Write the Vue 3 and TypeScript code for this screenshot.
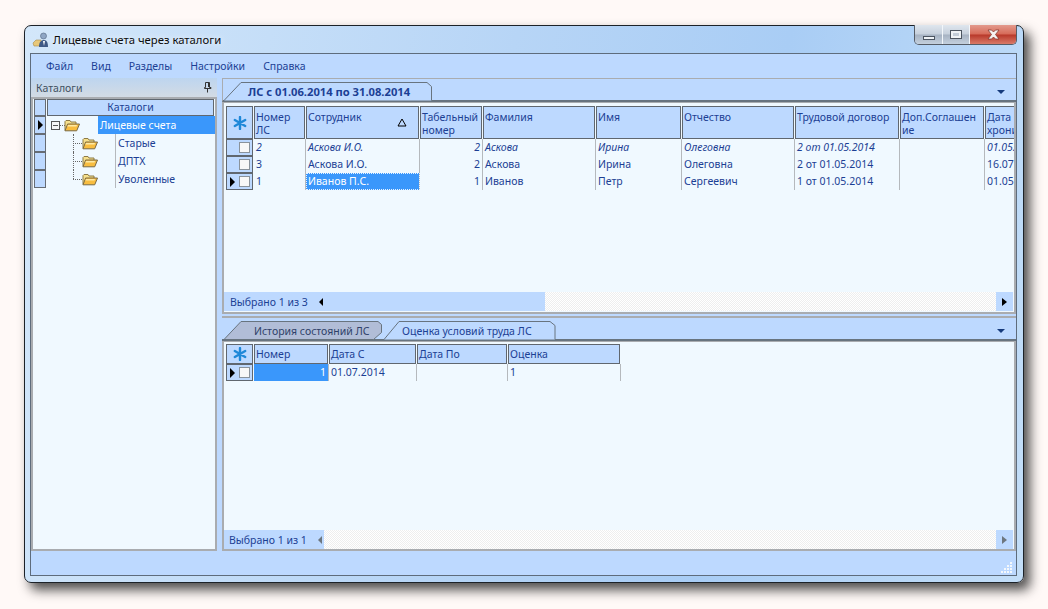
<script setup lang="ts">
interface Col {
  title: string
  width: number
  sort?: boolean
  align?: string
}
interface Row {
  cells: string[]
  italic?: boolean
  current?: boolean
}

const menu = ['Файл', 'Вид', 'Разделы', 'Настройки', 'Справка']

const tree = [
  { text: 'Лицевые счета', root: true },
  { text: 'Старые', root: false },
  { text: 'ДПТХ', root: false },
  { text: 'Уволенные', root: false }
]

const topCols: Col[] = [
  { title: 'Номер ЛС', width: 52 },
  { title: 'Сотрудник', width: 114, sort: true },
  { title: 'Табельный номер', width: 63, align: 'right' },
  { title: 'Фамилия', width: 113 },
  { title: 'Имя', width: 86 },
  { title: 'Отчество', width: 113 },
  { title: 'Трудовой договор', width: 105 },
  { title: 'Доп.Соглашение', width: 85 },
  { title: 'Дата хронизации', width: 56 }
]

const topRows: Row[] = [
  { cells: ['2', 'Аскова И.О.', '2', 'Аскова', 'Ирина', 'Олеговна', '2 от 01.05.2014', '', '01.05.2014'], italic: true },
  { cells: ['3', 'Аскова И.О.', '2', 'Аскова', 'Ирина', 'Олеговна', '2 от 01.05.2014', '', '16.07.2014'] },
  { cells: ['1', 'Иванов П.С.', '1', 'Иванов', 'Петр', 'Сергеевич', '1 от 01.05.2014', '', '01.05.2014'], current: true }
]

const bottomCols: Col[] = [
  { title: 'Номер', width: 75, align: 'right' },
  { title: 'Дата С', width: 88 },
  { title: 'Дата По', width: 91 },
  { title: 'Оценка', width: 113 }
]

const bottomRows: Row[] = [{ cells: ['1', '01.07.2014', '', '1'], current: true }]

const template = (cols: Col[]) => '28px ' + cols.map(c => c.width + 'px').join(' ')
</script>

<template>
  <div class="page">
    <div class="window">
      <div class="titlebar">
        <svg class="app-icon" width="18" height="18" viewBox="0 0 18 18">
          <path d="M1 12l3-3h5l1 6H2z" fill="#e8c87a" stroke="#a88a48" stroke-width=".6" />
          <circle cx="11.500" cy="5" r="3" fill="#8fa6c4" stroke="#51637e" stroke-width=".6" />
          <path d="M7 16c0-5 2-7 5-7s4 3 4 7z" fill="#3f5a86" />
          <path d="M11 10l2 0-1 5z" fill="#fff" />
        </svg>
        <span class="title">Лицевые счета через каталоги</span>
        <div class="win-buttons">
          <div class="win-btn min"><i></i></div>
          <div class="win-btn max"><i></i></div>
          <div class="win-btn close">
            <svg width="15" height="11" viewBox="0 0 15 11">
              <path d="M2 1h3.500l2 2 2-2H13l-3.500 4.500L13 10H9.500l-2-2-2 2H2l3.500-4.500z" fill="#f6f2f0" stroke="#7a3228" stroke-width=".7" />
            </svg>
          </div>
        </div>
      </div>

      <div class="frame">
        <div class="menubar">
          <span v-for="m in menu" :key="m" class="menu-item">{{ m }}</span>
        </div>

        <div class="workspace">
          <!-- Каталоги -->
          <aside class="side">
            <div class="side-head">
              <span>Каталоги</span>
              <svg width="9" height="11" viewBox="0 0 9 11">
                <path d="M2.500 .5h4v5h1.500v1h-6.500v-1h1zM4.500 6.500v4M5.500 1v4" fill="none" stroke="#333" />
              </svg>
            </div>
            <div class="side-grid">
              <div class="tree-row tree-header">
                <div class="indicator"></div>
                <div class="head-cell center">Каталоги</div>
              </div>
              <div v-for="(t, i) in tree" :key="t.text" class="tree-row">
                <div class="indicator">
                  <i v-if="t.root" class="arrow"></i>
                </div>
                <div class="tree-icons">
                  <template v-if="t.root">
                    <span class="expander"></span>
                    <i class="dot-h short"></i>
                  </template>
                  <template v-else>
                    <i class="dot-v" :class="{ last: i === tree.length - 1 }"></i>
                    <i class="dot-h"></i>
                  </template>
                  <svg class="folder" :class="{ root: t.root }" width="16" height="13" viewBox="0 0 16 13">
                    <path d="M1 11.500V2.500l1-1h4l1 1.500h5v2" fill="#f6e08c" stroke="#8d7a45" />
                    <path d="M1 11.800l2.600-6.800h11.900l-2.800 6.800z" fill="#f8bd40" stroke="#7a6a44" />
                    <path d="M4 6l9 0-.6 1.500h-9z" fill="#fde9a4" />
                  </svg>
                </div>
                <div class="tree-text" :class="{ selected: t.root }">{{ t.text }}</div>
              </div>
            </div>
          </aside>

          <div class="right">
            <!-- Верхняя таблица -->
            <section class="pane top-pane">
              <div class="tabstrip top-strip">
                <div class="tab active-top">
                  <svg class="tab-shape" width="208" height="19" viewBox="0 0 208 19">
                    <path d="M0 18.500L17 .5h186l4.500 4v14" fill="#bdd9ff" stroke="#68747f" />
                  </svg>
                  <span class="tab-label bold">ЛС с 01.06.2014 по 31.08.2014</span>
                </div>
                <i class="tab-arrow"></i>
              </div>
              <div class="grid-box">
                <div class="grid-body">
                  <div class="grid-row" :style="{ gridTemplateColumns: template(topCols) }">
                    <div class="head-cell corner tall">
                      <svg width="14" height="14" viewBox="0 0 14 14">
                        <path d="M7 1v12M1.800 4l10.400 6M12.200 4L1.800 10" stroke="#1e88d8" stroke-width="2.400" stroke-linecap="round" />
                      </svg>
                    </div>
                    <div v-for="c in topCols" :key="c.title" class="head-cell tall">
                      <span class="wrap">{{ c.title }}</span>
                      <svg v-if="c.sort" class="sort" width="10" height="9" viewBox="0 0 10 9">
                        <path d="M5 1L9 8H1z" fill="none" stroke="#000" />
                      </svg>
                    </div>
                  </div>
                  <div
                    v-for="r in topRows"
                    :key="r.cells[0]"
                    class="grid-row data"
                    :class="{ italic: r.italic }"
                    :style="{ gridTemplateColumns: template(topCols) }"
                  >
                    <div class="row-head">
                      <i v-if="r.current" class="arrow"></i>
                      <span class="check"></span>
                    </div>
                    <div
                      v-for="(cell, j) in r.cells"
                      :key="j"
                      class="cell"
                      :class="{ right: topCols[j].align === 'right', focus: r.current && j === 1 }"
                    >{{ cell }}</div>
                  </div>
                </div>
                <div class="statusline">
                  <div class="status-left top-status">
                    <span>Выбрано 1 из 3</span>
                    <i class="arrow-left"></i>
                  </div>
                  <div class="hatch"></div>
                  <div class="scroll-btn"><i class="arrow"></i></div>
                </div>
              </div>
            </section>

            <!-- Нижняя таблица -->
            <section class="pane bottom-pane">
              <div class="tabstrip bottom-strip">
                <div class="tab inactive">
                  <svg class="tab-shape" width="158" height="19" viewBox="0 0 158 19">
                    <path d="M0 18.500L17 .5h137l3.500 3v8l-8 7z" fill="#b1bdd7" stroke="#68747f" />
                  </svg>
                  <span class="tab-label">История состояний ЛС</span>
                </div>
                <div class="tab active-bottom">
                  <svg class="tab-shape" width="172" height="19" viewBox="0 0 172 19">
                    <path d="M0 18.500L15 .5h151l5 4v14" fill="#bdd9ff" stroke="#68747f" />
                  </svg>
                  <span class="tab-label">Оценка условий труда ЛС</span>
                </div>
                <i class="tab-arrow"></i>
              </div>
              <div class="grid-box">
                <div class="grid-body">
                  <div class="grid-row" :style="{ gridTemplateColumns: template(bottomCols) }">
                    <div class="head-cell corner low">
                      <svg width="14" height="14" viewBox="0 0 14 14">
                        <path d="M7 1v12M1.800 4l10.400 6M12.200 4L1.800 10" stroke="#1e88d8" stroke-width="2.400" stroke-linecap="round" />
                      </svg>
                    </div>
                    <div v-for="c in bottomCols" :key="c.title" class="head-cell low">{{ c.title }}</div>
                  </div>
                  <div
                    v-for="r in bottomRows"
                    :key="r.cells[0]"
                    class="grid-row data"
                    :style="{ gridTemplateColumns: template(bottomCols) }"
                  >
                    <div class="row-head">
                      <i class="arrow"></i>
                      <span class="check"></span>
                    </div>
                    <div
                      v-for="(cell, j) in r.cells"
                      :key="j"
                      class="cell"
                      :class="{ right: bottomCols[j].align === 'right', active: j === 0 }"
                    >{{ cell }}</div>
                  </div>
                </div>
                <div class="statusline">
                  <div class="status-left bottom-status">
                    <span>Выбрано 1 из 1</span>
                    <i class="arrow-left grey"></i>
                  </div>
                  <div class="hatch"></div>
                  <div class="scroll-btn"><i class="arrow grey"></i></div>
                </div>
              </div>
            </section>
          </div>
        </div>

        <div class="statusbar">
          <svg width="12" height="12" viewBox="0 0 12 12">
            <path d="M9 0h2v2H9zM6 3h2v2H6zM9 3h2v2H9zM3 6h2v2H3zM6 6h2v2H6zM9 6h2v2H9zM0 9h2v2H0zM3 9h2v2H3zM6 9h2v2H6zM9 9h2v2H9z" fill="#f4f8fc" />
          </svg>
        </div>
      </div>
    </div>
  </div>
</template>

<style>
body {
  background: #fff9f7;
}
</style>

<style scoped>
.page {
  width: 1048px;
  height: 609px;
  padding: 25px 0 0 24px;
  box-sizing: border-box;
  overflow: hidden;
  font-family: "Noto Sans", "Liberation Sans", sans-serif;
  font-size: 10.5px;
  color: #1c3f94;
}

.window {
  width: 1000px;
  height: 558px;
  box-sizing: border-box;
  border: 1px solid #1c2228;
  border-radius: 7px;
  background: linear-gradient(100deg, #d3e7fa 0%, #b7d5f6 45%, #a9cdf5 70%, #c3def8 100%);
  box-shadow: 6px 7px 12px rgba(20, 20, 20, 0.75);
  padding: 0 6px 6px 5px;
  display: flex;
  flex-direction: column;
}

.titlebar {
  height: 27px;
  flex: none;
  display: flex;
  align-items: flex-start;
}

.app-icon {
  margin: 5px 3px 0 2px;
}

.title {
  margin-top: 6px;
  font-size: 11.3px;
  color: #0c0c0c;
  text-shadow: 0 0 6px #fff;
}

.win-buttons {
  margin-left: auto;
  margin-top: -1px;
  display: flex;
  height: 19px;
  border: 1px solid #555c66;
  border-top: none;
  border-radius: 0 0 5px 5px;
  overflow: hidden;
}

.win-btn {
  display: flex;
  align-items: center;
  justify-content: center;
  background: linear-gradient(#dfe6ee 0%, #c6d0dc 48%, #a6b2c2 52%, #c4d0dd 100%);
  border-right: 1px solid #f2f6fa;
}

.min {
  width: 27px;
}

.min i {
  width: 10px;
  height: 2px;
  margin-top: 7px;
  background: #eef2f6;
  border: 1px solid #4c5561;
}

.max {
  width: 26px;
}

.max i {
  width: 6px;
  height: 3px;
  background: #c2ccd8;
  border: 2px solid #eef2f6;
  outline: 1px solid #4c5561;
  margin-top: -1px;
}

.close {
  width: 46px;
  border-right: none;
  background: linear-gradient(#e39a8d 0%, #d66a58 48%, #b8382a 52%, #d97a68 100%);
}

.frame {
  flex: 1;
  min-height: 0;
  border: 1px solid #5e6c7c;
  background: #bdd9ff;
  display: flex;
  flex-direction: column;
}

.menubar {
  height: 24px;
  flex: none;
  display: flex;
  align-items: center;
  padding-left: 15px;
  gap: 18px;
}

.menu-item {
  line-height: 24px;
}

.workspace {
  flex: 1;
  min-height: 0;
  display: flex;
  gap: 5px;
}

.side {
  width: 186px;
  flex: none;
  display: flex;
  flex-direction: column;
}

.side-head {
  height: 19px;
  flex: none;
  display: flex;
  align-items: center;
  justify-content: space-between;
  padding: 0 5px 0 5px;
  color: #41505f;
  background: linear-gradient(#bdd5ef, #d3dbe4);
}

.side-grid {
  flex: 1;
  border: 2px solid #a9acb0;
  background: #f0f9ff;
}

.tree-row {
  display: flex;
  height: 18px;
}

.tree-header {
  height: 17px;
}

.tree-header .head-cell {
  flex: 1;
  height: 17px;
  line-height: 15px;
}

.indicator {
  width: 12px;
  box-sizing: border-box;
  margin: 0 1px;
  flex: none;
  background: #bdd9ff;
  border: 1px solid #666c74;
  display: flex;
  align-items: center;
}

.tree-icons {
  position: relative;
  width: 68px;
  flex: none;
}

.expander {
  position: absolute;
  left: 4px;
  top: 5px;
  width: 9px;
  height: 9px;
  box-sizing: border-box;
  border: 1px solid #555;
  background: linear-gradient(#555, #555) center / 5px 1px no-repeat, #f6f6f6;
}

.dot-h {
  position: absolute;
  left: 26px;
  top: 9px;
  width: 9px;
  border-top: 1px dotted #666;
}

.dot-h.short {
  left: 13px;
  width: 5px;
}

.dot-v {
  position: absolute;
  left: 26px;
  top: 0;
  height: 18px;
  border-left: 1px dotted #666;
}

.dot-v.last {
  height: 9px;
}

.folder {
  position: absolute;
  left: 35px;
  top: 3px;
}

.folder.root {
  left: 17px;
}

.tree-text {
  flex: 1;
  border-left: 1px solid #b5b9bd;
  padding-left: 2px;
  line-height: 18px;
}

.tree-text.selected {
  margin-left: -17px;
  border-left: none;
  color: #fff;
  background: #3a97fb;
}

.right {
  flex: 1;
  min-width: 0;
  display: flex;
  flex-direction: column;
  gap: 2px;
}

.pane {
  display: flex;
  flex-direction: column;
  min-height: 0;
}

.top-pane {
  height: 236px;
  flex: none;
}

.bottom-pane {
  flex: 1;
  border-top: 2px solid #a9acb0;
}

.tabstrip {
  flex: none;
  position: relative;
  display: flex;
  align-items: flex-end;
  box-sizing: border-box;
  background: #bdd9ff;
  border-bottom: 2px solid #68747f;
}

.top-strip {
  height: 24px;
  border-top: 1px solid #a9acb0;
  border-left: 1px solid #a9acb0;
  padding-left: 1px;
}

.bottom-strip {
  height: 23px;
  padding-left: 2px;
}

.tab {
  position: relative;
  height: 19px;
  flex: none;
  display: flex;
  align-items: center;
  margin-bottom: -1px;
}

.active-top {
  width: 208px;
}

.inactive {
  width: 158px;
}

.active-bottom {
  width: 172px;
  margin-left: 2px;
}

.tab-shape {
  position: absolute;
  left: 0;
  top: 0;
}

.tab-label {
  position: relative;
  padding-left: 18px;
  white-space: nowrap;
}

.active-top .tab-label {
  padding-left: 24px;
}

.inactive .tab-label {
  padding-left: 30px;
  color: #2f4169;
}

.bold {
  font-weight: 700;
  font-size: 11.2px;
}

.tab-arrow {
  position: absolute;
  right: 11px;
  top: 11px;
  width: 0;
  height: 0;
  border-left: 4px solid transparent;
  border-right: 4px solid transparent;
  border-top: 4px solid #153a7c;
}

.grid-box {
  flex: 1;
  min-height: 0;
  box-sizing: border-box;
  border: 2px solid #a9acb0;
  border-top-width: 1px;
  background: #f0f9ff;
  display: flex;
  flex-direction: column;
}

.grid-body {
  flex: 1;
  min-height: 0;
  overflow: hidden;
  padding: 3px 0 0 2px;
}

.bottom-pane .grid-body {
  padding-top: 2px;
}

.grid-row {
  display: grid;
}

.head-cell {
  box-sizing: border-box;
  position: relative;
  background: #bdd9ff;
  border: 1px solid #60676f;
  padding: 0 1px;
  overflow: hidden;
  margin-right: 1px;
}

.center {
  text-align: center;
}

.tall {
  height: 33px;
  line-height: 13px;
  padding-top: 4px;
}

.low {
  height: 20px;
  line-height: 18px;
}

.corner {
  display: flex;
  align-items: center;
  justify-content: center;
  padding: 0;
}

.wrap {
  display: block;
  word-break: break-word;
}

.sort {
  position: absolute;
  right: 11px;
  top: 11px;
}

.data {
  height: 17px;
}

.italic {
  font-style: italic;
}

.row-head {
  box-sizing: border-box;
  height: 17px;
  margin-right: 1px;
  background: #bdd9ff;
  border: 1px solid #60676f;
  display: flex;
  align-items: center;
  position: relative;
}

.check {
  position: absolute;
  left: 12px;
  top: 2px;
  width: 11px;
  height: 11px;
  background: #f8f8f8;
  border: 1px solid #8a939c;
  box-sizing: border-box;
}

.arrow {
  display: block;
  width: 0;
  height: 0;
  margin-left: 3px;
  border-top: 5px solid transparent;
  border-bottom: 5px solid transparent;
  border-left: 5px solid #000;
}

.arrow.grey {
  border-left-color: #6d767f;
}

.cell {
  box-sizing: border-box;
  padding: 0 2px;
  line-height: 16px;
  border-right: 1px solid #b5b9bd;
  white-space: nowrap;
  overflow: hidden;
}

.cell.right {
  text-align: right;
}

.cell.focus {
  color: #fff;
  background: #3a97fb;
  outline: 1px dotted #e8f3ff;
  outline-offset: -1px;
}

.cell.active {
  color: #fff;
  background: #3a97fb;
}

.statusline {
  height: 19px;
  flex: none;
  display: flex;
  margin: 0 1px 1px 0;
}

.bottom-pane .statusline {
  margin-bottom: 0;
}

.status-left {
  flex: none;
  box-sizing: border-box;
  background: #bdd9ff;
  display: flex;
  align-items: center;
  white-space: nowrap;
}

.top-status {
  width: 321px;
  padding-left: 6px;
  gap: 11px;
}

.bottom-status {
  width: 100px;
  padding-left: 5px;
  gap: 11px;
}

.arrow-left {
  width: 0;
  height: 0;
  border-top: 4px solid transparent;
  border-bottom: 4px solid transparent;
  border-right: 4px solid #000;
}

.arrow-left.grey {
  border-right-color: #6d767f;
}

.hatch {
  flex: 1;
  background: repeating-conic-gradient(#ffffff 0 25%, #eeeeee 0 50%) 0 0 / 2px 2px;
}

.scroll-btn {
  width: 17px;
  flex: none;
  background: #bdd9ff;
  display: flex;
  align-items: center;
  justify-content: center;
}

.scroll-btn .arrow {
  margin-left: 0;
  border-top-width: 4px;
  border-bottom-width: 4px;
}

.statusbar {
  height: 23px;
  flex: none;
  display: flex;
  justify-content: flex-end;
  align-items: flex-end;
  padding: 0 3px 1px 0;
}
</style>
